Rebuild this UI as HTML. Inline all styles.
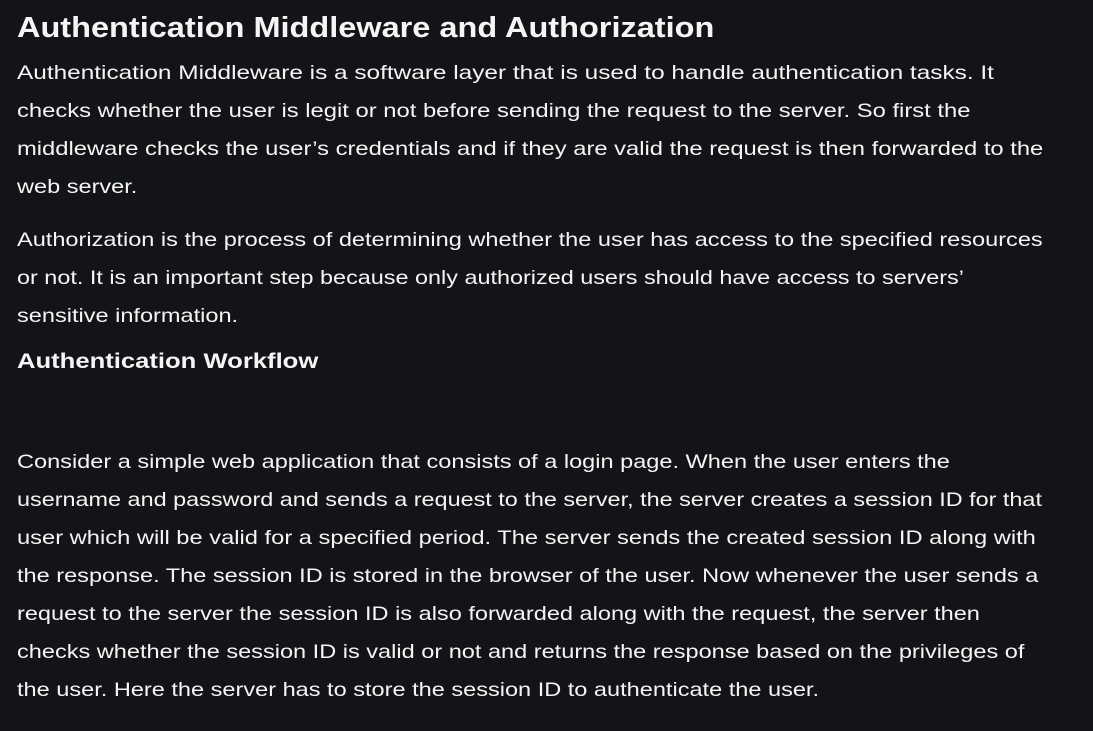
<!DOCTYPE html>
<html><head><meta charset="utf-8"><style>
html,body{margin:0;padding:0;background:#131417;width:1093px;height:731px;overflow:hidden}
body{font-family:"Liberation Sans",sans-serif;color:#f5f5f5;position:relative}
.l{position:absolute;left:17px;white-space:nowrap;font-size:19.5px;line-height:38px;transform:scaleX(1.207);transform-origin:0 0}
h1{position:absolute;left:17px;top:8px;margin:0;font-size:28.5px;font-weight:bold;line-height:40px;white-space:nowrap;transform:scaleX(1.14);transform-origin:0 0}
h2{position:absolute;left:17px;top:344px;margin:0;font-size:21px;font-weight:bold;line-height:36px;white-space:nowrap;transform:scaleX(1.22);transform-origin:0 0}
</style></head><body>
<h1>Authentication Middleware and Authorization</h1>
<div class="l" style="top:54px;transform:scaleX(1.25)">Authentication Middleware is a software layer that is used to handle authentication tasks. It</div>
<div class="l" style="top:92px;transform:scaleX(1.22)">checks whether the user is legit or not before sending the request to the server. So first the</div>
<div class="l" style="top:130px;transform:scaleX(1.218)">middleware checks the user’s credentials and if they are valid the request is then forwarded to the</div>
<div class="l" style="top:168px">web server.</div>
<div class="l" style="top:221px">Authorization is the process of determining whether the user has access to the specified resources</div>
<div class="l" style="top:259px;transform:scaleX(1.2)">or not. It is an important step because only authorized users should have access to servers’</div>
<div class="l" style="top:297px">sensitive information.</div>
<h2>Authentication Workflow</h2>
<div class="l" style="top:443px">Consider a simple web application that consists of a login page. When the user enters the</div>
<div class="l" style="top:481px;transform:scaleX(1.2)">username and password and sends a request to the server, the server creates a session ID for that</div>
<div class="l" style="top:519px;transform:scaleX(1.215)">user which will be valid for a specified period. The server sends the created session ID along with</div>
<div class="l" style="top:557px">the response. The session ID is stored in the browser of the user. Now whenever the user sends a</div>
<div class="l" style="top:595px">request to the server the session ID is also forwarded along with the request, the server then</div>
<div class="l" style="top:633px">checks whether the session ID is valid or not and returns the response based on the privileges of</div>
<div class="l" style="top:671px">the user. Here the server has to store the session ID to authenticate the user.</div>
</body></html>
